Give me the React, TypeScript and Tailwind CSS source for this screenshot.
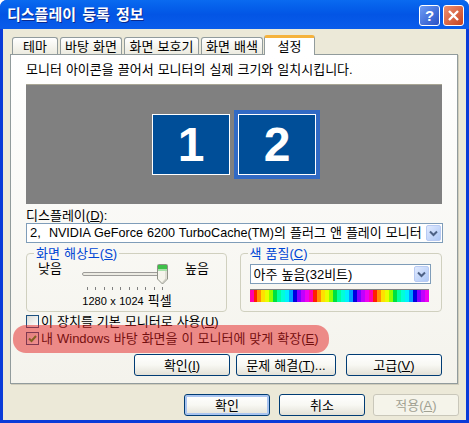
const font = "font-['Liberation_Sans','Noto_Sans_CJK_KR',sans-serif]";

const tabs = [
  { label: '테마', w: 'w-[46px]' },
  { label: '바탕 화면', w: 'w-[62px]' },
  { label: '화면 보호기', w: 'w-[75px]' },
  { label: '화면 배색', w: 'w-[62px]' },
];

const rainbow = [
  '#ff00b0', '#ff2000', '#ff9000', '#ffe000', '#e8ff00', '#90ff00', '#00e040', '#00ffa0',
  '#00ffd8', '#00f0ff', '#00a0ff', '#0000e0', '#8000ff', '#c000ff', '#f000f0',
];

function Tab({ label, w }: { label: string; w: string }) {
  return (
    <div className={`${w} h-[17px] mr-[2px] flex items-center justify-center border border-b-0 border-[#919B9C] rounded-t-[3px] bg-gradient-to-b from-white to-[#ECEBE0] text-[13px] leading-none text-black`}>
      {label}
    </div>
  );
}

function Monitor({ n, selected }: { n: string; selected?: boolean }) {
  return (
    <div className={selected ? 'border-[4px] border-[#316AC5]' : 'border-[4px] border-transparent'}>
      <div className="w-[78px] h-[61px] border border-white bg-[#004E98] flex items-center justify-center text-white text-[48px] font-bold font-['Liberation_Sans',sans-serif] leading-none">
        {n}
      </div>
    </div>
  );
}

function Combo({ children, className }: { children: React.ReactNode; className: string }) {
  return (
    <div className={`${className} flex items-center justify-between border border-[#7F9DB9] bg-white pl-[3px] pr-[1px] text-[13px] leading-none text-black`}>
      <span className="whitespace-pre">{children}</span>
      <span className="shrink-0 w-[15px] h-[16px] rounded-[2px] border border-[#B9CBF3] bg-gradient-to-br from-[#E1EAFE] to-[#AEC8F7] flex items-center justify-center">
        <svg width="9" height="7" viewBox="0 0 9 7">
          <path d="M1 1.5 L4.5 5 L8 1.5" fill="none" stroke="#4D6185" strokeWidth="2" />
        </svg>
      </span>
    </div>
  );
}

function Button({ children, className, focused, disabled }: { children: React.ReactNode; className: string; focused?: boolean; disabled?: boolean }) {
  const tone = disabled
    ? 'border-[#C9C7BA] bg-[#F5F4EA] text-[#A1A192]'
    : 'border-[#003C74] bg-gradient-to-b from-white via-[#F8F8F3] to-[#E3E1D7] text-black';
  return (
    <div className={`${className} h-[22px] rounded-[3px] border ${tone} flex items-center justify-center text-[13px] leading-none ${focused ? 'shadow-[inset_0_0_0_2px_#A9C4F0]' : ''}`}>
      {children}
    </div>
  );
}

function U({ children }: { children: string }) {
  return <span className="underline underline-offset-1">{children}</span>;
}

export default function App() {
  return (
    <div className={`${font} relative w-[469px] h-[423px] overflow-hidden bg-[#0A3BD8] rounded-t-[7px] flex flex-col [word-spacing:0.4px]`}>
      {/* title bar */}
      <div className="h-[29px] shrink-0 flex items-center justify-between pl-[7px] pr-[5px] bg-gradient-to-b from-[#0A6AF0] via-[#0355E5] to-[#0A5CEB]">
        <span className="text-white text-[15px] font-bold leading-none [word-spacing:2px] [text-shadow:1px_1px_0_#0A2A90]">디스플레이 등록 정보</span>
        <div className="flex gap-[3px] pt-[1px]">
          <div className="w-[21px] h-[21px] rounded-[3px] border border-white bg-gradient-to-br from-[#6E9CF5] to-[#2A4FC5] flex items-center justify-center text-white text-[15px] font-bold leading-none">?</div>
          <div className="w-[21px] h-[21px] rounded-[3px] border border-white bg-gradient-to-br from-[#EB8F6F] to-[#C8401B] flex items-center justify-center">
            <svg width="13" height="13" viewBox="0 0 13 13">
              <path d="M2 2 L11 11 M11 2 L2 11" stroke="#fff" strokeWidth="2.4" />
            </svg>
          </div>
        </div>
      </div>

      {/* dialog body */}
      <div className="mx-[3px] mb-[3px] flex-1 bg-[#ECE9D8] pl-[7px] pr-[8px] pt-[5px] flex flex-col">
        <div className="h-[20px] flex items-end pl-[2px]">
          {tabs.map(t => (
            <Tab key={t.label} {...t} />
          ))}
          <div className="relative z-10 -mb-[1px] w-[51px] h-[20px] -ml-[1px] border-x border-[#919B9C] border-t-[3px] border-t-[#F5B23C] rounded-t-[3px] bg-white flex items-center justify-center text-[13px] leading-none text-black">
            설정
          </div>
        </div>

        <div className="h-[330px] border border-[#919B9C] bg-gradient-to-b from-white to-[#F4F3EC] px-[15px] flex flex-col text-[13px] leading-none text-black shadow-[1px_1px_0_#D0CDBC]">
          <div className="h-[29px] flex items-center whitespace-nowrap">모니터 아이콘을 끌어서 모니터의 실제 크기와 일치시킵니다.</div>

          <div className="h-[120px] w-[416px] bg-[#808080] flex items-center justify-center border-t border-[#A8A594]">
            <Monitor n="1" />
            <Monitor n="2" selected />
          </div>

          <div className="h-[19px] flex items-end pb-[1px]">
            <span>디스플레이(<U>D</U>):</span>
          </div>
          <Combo className="h-[20px] w-[417px]">
            2,  <span className="text-[12.6px]">NVIDIA GeForce 6200 TurboCache(TM)</span>의 플러그 앤 플레이 모니터
          </Combo>

          <div className="flex gap-[13px] mt-[3px]">
            <fieldset className="w-[201px] h-[66px] border border-[#D0D0BF] rounded-[4px] px-[11px]">
              <legend className="-ml-[4px] px-[2px] text-[#0046D5] text-[13px] leading-[15px]">
                화면 해상도(<U>S</U>)
              </legend>
              <div className="h-[47px] flex">
                <span className="w-[44px] pt-[1px]">낮음</span>
                <div className="w-[90px] relative">
                  <div className="absolute left-0 top-[11px] w-[86px] h-[4px] rounded-[2px] bg-[#ECEBE3] border border-[#9D9C99]" />
                  <svg className="absolute left-[75px] top-[3px]" width="11" height="21" viewBox="0 0 11 21">
                    <path d="M0.5 1.5 Q0.5 0.5 1.5 0.5 L9.5 0.5 Q10.5 0.5 10.5 1.5 L10.5 15 L5.5 20 L0.5 15 Z" fill="#F5F4EC" stroke="#8F9187" />
                    <rect x="1" y="1" width="9" height="4" fill="#3FC04A" />
                    <rect x="1" y="5" width="9" height="2" fill="#A6E0A8" />
                    <path d="M8.5 7 L9.5 7 L9.5 15 L5.5 19 L5 18.4 L8.5 14.6 Z" fill="#C9C8BC" />
                  </svg>
                  <div className="absolute left-[5px] top-[26px] flex gap-[7px]">
                    {Array.from({ length: 10 }).map((_, i) => (
                      <div key={i} className="w-[1px] h-[3px] bg-[#808080] mr-[0.33px]" />
                    ))}
                  </div>
                  <div className="absolute left-[-4px] top-[33px] w-[98px] text-center whitespace-nowrap">
                    <span className="text-[11px]">1280 x 1024</span> 픽셀
                  </div>
                </div>
                <span className="ml-[13px] pt-[1px]">높음</span>
              </div>
            </fieldset>
            <fieldset className="w-[203px] h-[66px] border border-[#D0D0BF] rounded-[4px] px-[9px]">
              <legend className="-ml-[2px] px-[2px] text-[#0046D5] text-[13px] leading-[15px]">
                색 품질(<U>C</U>)
              </legend>
              <Combo className="h-[20px] w-[181px] mt-[3px]">아주 높음(32비트)</Combo>
              <div className="mt-[5px] h-[13px] w-[179px] flex border-t border-[#808080]">
                {[0, 1, 2].map(c =>
                  rainbow.map((color, i) => <div key={`${c}-${i}`} className="flex-1" style={{ background: color }} />),
                )}
              </div>
            </fieldset>
          </div>

          <label className="h-[17px] mt-[1px] flex items-center gap-[2px]">
            <span className="w-[13px] h-[13px] border border-[#1C5180] bg-gradient-to-br from-[#DCDCD7] to-white" />
            <span>이 장치를 기본 모니터로 사용(<U>U</U>)</span>
          </label>
          <label className="h-[17px] flex items-center gap-[2px]">
            <span className="w-[13px] h-[13px] border border-[#1C5180] bg-gradient-to-br from-[#DCDCD7] to-white flex items-center justify-center">
              <svg width="9" height="9" viewBox="0 0 9 9">
                <path d="M1 4.5 L3.5 7 L8 2" fill="none" stroke="#21A121" strokeWidth="2" />
              </svg>
            </span>
            <span>내 Windows 바탕 화면을 이 모니터에 맞게 확장(<U>E</U>)</span>
          </label>

          <div className="flex justify-end gap-[6px] mt-[7px]">
            <Button className="w-[96px]"><span>확인(<U>I</U>)</span></Button>
            <Button className="w-[100px] mr-[4px]"><span>문제 해결(<U>T</U>)...</span></Button>
            <Button className="w-[96px]"><span>고급(<U>V</U>)</span></Button>
          </div>
        </div>

        <div className="flex justify-end mt-[10px] -mr-[1px]">
          <Button className="w-[86px] mr-[9px]" focused>확인</Button>
          <Button className="w-[86px] mr-[8px]">취소</Button>
          <Button className="w-[86px]" disabled><span>적용(<U>A</U>)</span></Button>
        </div>
      </div>

      {/* red marker drawn over the screenshot */}
      <div className="absolute left-[13px] top-[325px] w-[316px] h-[28px] rounded-[13px] bg-[#E42020]/50" />
    </div>
  );
}
